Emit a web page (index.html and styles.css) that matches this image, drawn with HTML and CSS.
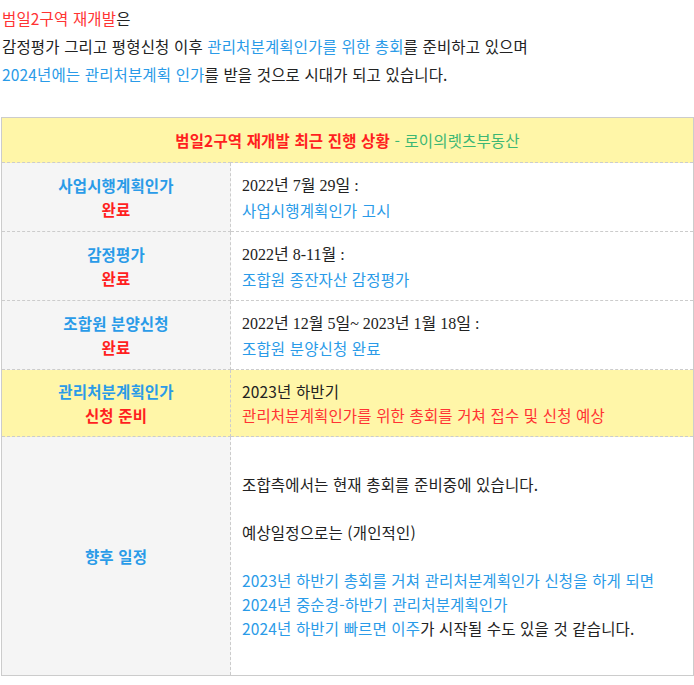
FILE: index.html
```html
<!DOCTYPE html>
<html lang="ko">
<head>
<meta charset="utf-8">
<link rel="stylesheet" href="styles.css">
</head>
<body>
<div class="intro">
  <p><span class="red">범일2구역 재개발</span>은</p>
  <p>감정평가 그리고 평형신청 이후 <span class="blue">관리처분계획인가를 위한 총회</span>를 준비하고 있으며</p>
  <p><span class="blue">2024년에는 관리처분계획 인가</span>를 받을 것으로 시대가 되고 있습니다.</p>
</div>
<table class="status">
  <tr class="head">
    <td colspan="2"><strong class="red-strong">범일2구역 재개발 최근 진행 상황</strong> <span class="green">- 로이의렛츠부동산</span></td>
  </tr>
  <tr>
    <th><span class="blue">사업시행계획인가</span><br><span class="red-strong">완료</span></th>
    <td><span class="serif">2022년 7월 29일 :</span><br><span class="blue">사업시행계획인가 고시</span></td>
  </tr>
  <tr>
    <th><span class="blue">감정평가</span><br><span class="red-strong">완료</span></th>
    <td><span class="serif">2022년 8-11월 :</span><br><span class="blue">조합원 종잔자산 감정평가</span></td>
  </tr>
  <tr>
    <th><span class="blue">조합원 분양신청</span><br><span class="red-strong">완료</span></th>
    <td><span class="serif">2022년 12월 5일~ 2023년 1월 18일 :</span><br><span class="blue">조합원 분양신청 완료</span></td>
  </tr>
  <tr class="hl">
    <th><span class="blue">관리처분계획인가</span><br><span class="red-strong">신청 준비</span></th>
    <td>2023년 하반기<br><span class="red">관리처분계획인가를 위한 총회를 거쳐 접수 및 신청 예상</span></td>
  </tr>
  <tr class="last">
    <th><span class="blue">향후 일정</span></th>
    <td><br>조합측에서는 현재 총회를 준비중에 있습니다.<br><br>예상일정으로는 (개인적인)<br><br><span class="blue">2023년 하반기 총회를 거쳐 관리처분계획인가 신청을 하게 되면<br>2024년 중순경-하반기 관리처분계획인가<br>2024년 하반기 빠르면 이주</span>가 시작될 수도 있을 것 같습니다.<br>&nbsp;</td>
  </tr>
</table>
</body>
</html>
```

FILE: styles.css
```css
html, body {
  margin: 0;
  padding: 0;
  background: #fff;
}
body {
  font-family: "Noto Sans CJK KR", "Noto Sans", sans-serif;
  font-size: 15.5px;
  letter-spacing: 0.15px;
  color: #222;
}
.intro {
  padding: 4px 0 0 2px;
}
.intro p {
  margin: 0;
  line-height: 28px;
}
.red { color: #ff3333; }
.blue { color: #2a9be8; }
.green { color: #3cb774; font-weight: normal; }
.red-strong { color: #ff1f1f; font-weight: bold; }
.serif { font-family: "Liberation Serif", "Noto Sans CJK KR", serif; font-size: 16px; letter-spacing: 0; }

.status {
  margin: 29px 0 0 1px;
  width: 693px;
  border-collapse: collapse;
  border: 1px solid #cccccc;
  line-height: 24px;
}
.status td, .status th {
  border: 1px dashed #cccccc;
  padding: 9px 11px;
  vertical-align: middle;
}
.status th {
  width: 206px;
  background: #f5f5f5;
  text-align: center;
  font-weight: bold;
}
.status td {
  text-align: left;
}
.status .head td {
  background: #fff6a8;
  text-align: center;
  padding: 10px 11px;
}
.status .hl th, .status .hl td {
  background: #fff6a8;
}
.status .last th, .status .last td {
  padding: 11px 11px;
}
```
